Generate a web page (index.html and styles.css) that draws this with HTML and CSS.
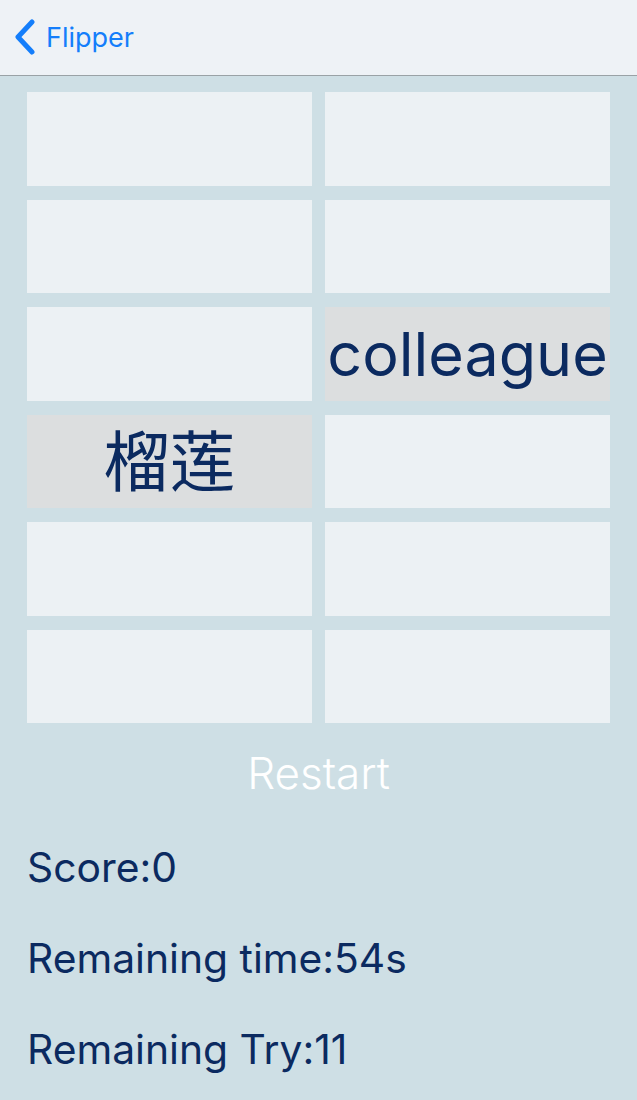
FILE: index.html
```html
<!DOCTYPE html>
<html>
<head>
<meta charset="utf-8">
<link rel="stylesheet" href="styles.css">
</head>
<body>
<div class="app">
  <header class="nav">
    <a class="back">
      <svg class="chev" width="24" height="36" viewBox="0 0 24 36"><path d="M19 3 L5 18 L19 33" fill="none" stroke="#147efb" stroke-width="5" stroke-linecap="round" stroke-linejoin="round"/></svg>
      <span>Flipper</span>
    </a>
  </header>
  <main class="content">
    <div class="grid">
      <div class="card"></div>
      <div class="card"></div>
      <div class="card"></div>
      <div class="card"></div>
      <div class="card"></div>
      <div class="card up en">colleague</div>
      <div class="card up zh">榴莲</div>
      <div class="card"></div>
      <div class="card"></div>
      <div class="card"></div>
      <div class="card"></div>
      <div class="card"></div>
    </div>
    <div class="restart">Restart</div>
    <div class="stats">
      <div class="stat">Score:0</div>
      <div class="stat">Remaining time:54s</div>
      <div class="stat">Remaining Try:11</div>
    </div>
  </main>
</div>
</body>
</html>
```
FILE: styles.css
```css
* { box-sizing: border-box; }
html, body { margin: 0; padding: 0; }
body {
  width: 637px;
  height: 1100px;
  overflow: hidden;
  background: #cedfe5;
  font-family: Inter, "Noto Sans", sans-serif;
  color: #0b2a60;
}
.nav {
  height: 76px;
  background: #eef2f6;
  border-bottom: 1px solid #9aa2a6;
  display: flex;
  align-items: center;
  padding-left: 13px;
}
.back {
  display: flex;
  align-items: center;
  gap: 9px;
  color: #147efb;
  font-size: 27px;
  margin-top: -1px;
}
.chev { display: block; }
.content {
  padding: 16px 27px 0 27px;
}
.grid {
  display: grid;
  grid-template-columns: 285px 285px;
  column-gap: 13px;
  grid-auto-rows: 93.75px;
  row-gap: 13.75px;
}
.card {
  background: #ecf1f4;
  display: flex;
  align-items: center;
  justify-content: center;
  white-space: nowrap;
}
.card.up { background: #dcdedf; }
.en { font-size: 61px; line-height: 74px; }
.zh {
  font-family: "Noto Sans CJK SC", sans-serif;
  font-size: 66px;
  line-height: 66px;
  padding-bottom: 8px;
}
.restart {
  color: #ffffff;
  font-size: 44px;
  font-weight: 300;
  text-align: center;
  margin-top: 22px;
  line-height: 56px;
}
.stats {
  display: flex;
  flex-direction: column;
  gap: 33px;
  margin-top: 37px;
}
.stat {
  font-size: 40.8px;
  line-height: 58px;
}
```
